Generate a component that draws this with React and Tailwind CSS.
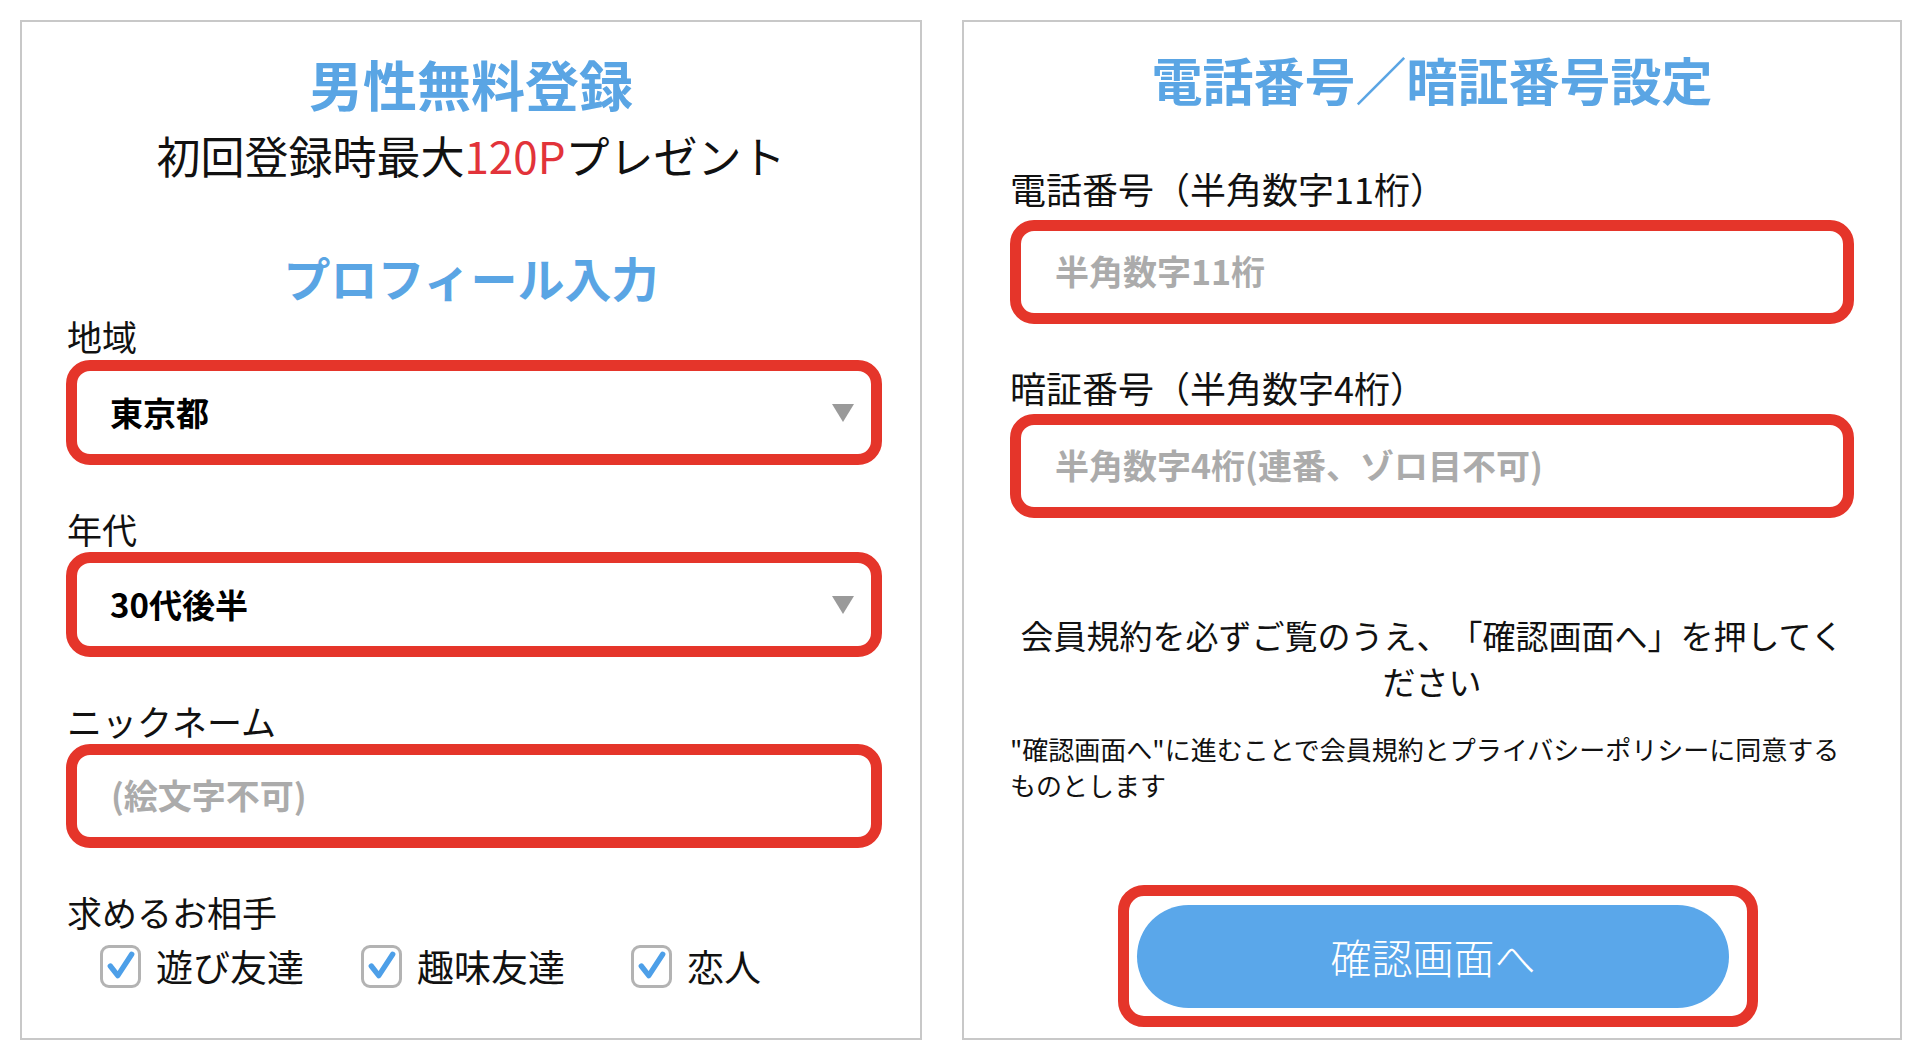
import React from "react";

const jp = { fontFamily: '"Noto Sans CJK JP", "Noto Sans", sans-serif' };

function Check({ label }) {
  return (
    <div className="flex items-center">
      <div className="w-[41px] h-[43px] rounded-[9px] border-[3px] border-[#b3b3b3] bg-white flex items-center justify-center">
        <svg width="30" height="30" viewBox="0 0 28 28">
          <path d="M4 14 L11 23 L24 3" fill="none" stroke="#4d9fe8" strokeWidth="5" strokeLinecap="round" strokeLinejoin="round" />
        </svg>
      </div>
      <span className="ml-[15px] text-[37px] leading-[44px] text-[#111]">{label}</span>
    </div>
  );
}

function SelectBox({ value }) {
  return (
    <div className="ml-[44px] w-[816px] h-[105px] rounded-[24px] border-[11px] border-[#e5352a] bg-white flex items-center pl-[33px] pr-[17px]">
      <span className="flex-1 text-[33px] font-bold text-black">{value}</span>
      <svg width="22" height="18" viewBox="0 0 22 18">
        <polygon points="0,0 22,0 11,18" fill="#9a9a9a" />
      </svg>
    </div>
  );
}

function InputBox({ placeholder, className = "" }) {
  return (
    <div className={"h-[104px] rounded-[24px] border-[11px] border-[#e5352a] bg-white flex items-center pl-[34px] pb-[4px] " + className}>
      <span className="text-[34px] font-bold text-[#ababab]">{placeholder}</span>
    </div>
  );
}

function Label({ children, className = "" }) {
  return <div className={"text-[35px] leading-[40px] text-[#111] " + className}>{children}</div>;
}

export default function App() {
  return (
    <div className="w-[1920px] h-[1060px] bg-white flex items-start pt-[20px] pl-[20px] gap-[40px] [text-spacing-trim:space-all]" style={jp}>
      {/* Left panel */}
      <div className="w-[902px] h-[1020px] border-2 border-[#c8c8c8] flex flex-col">
        <div className="mt-[32px] text-center text-[54px] leading-[60px] font-bold text-[#5aa5e4]">男性無料登録</div>
        <div className="mt-[16px] text-center text-[44px] leading-[50px] text-[#111]">
          初回登録時最大<span className="text-[#e2333a]">120P</span>プレゼント
        </div>
        <div className="mt-[70px] text-center text-[47px] leading-[54px] font-bold text-[#5aa5e4]">プロフィール入力</div>
        <Label className="mt-[12px] ml-[45px]">地域</Label>
        <div className="mt-[4px]">
          <SelectBox value="東京都" />
        </div>
        <Label className="mt-[44px] ml-[45px]">年代</Label>
        <div className="mt-[3px]">
          <SelectBox value="30代後半" />
        </div>
        <Label className="mt-[44px] ml-[45px]">ニックネーム</Label>
        <div className="mt-[3px]">
          <InputBox placeholder="(絵文字不可)" className="ml-[44px] w-[816px]" />
        </div>
        <Label className="mt-[44px] ml-[45px]">求めるお相手</Label>
        <div className="mt-[12px] ml-[78px] flex items-center">
          <div className="w-[261px]"><Check label="遊び友達" /></div>
          <div className="w-[270px]"><Check label="趣味友達" /></div>
          <Check label="恋人" />
        </div>
      </div>

      {/* Right panel */}
      <div className="w-[940px] h-[1020px] border-2 border-[#c8c8c8] flex flex-col px-[46px]">
        <div className="mt-[28px] text-center text-[51px] leading-[58px] font-bold text-[#5aa5e4]">電話番号／暗証番号設定</div>
        <Label className="mt-[60px] text-[36px]">電話番号（半角数字11桁）</Label>
        <InputBox placeholder="半角数字11桁" className="mt-[12px]" />
        <Label className="mt-[43px] text-[36px]">暗証番号（半角数字4桁）</Label>
        <InputBox placeholder="半角数字4桁(連番、ゾロ目不可)" className="mt-[7px]" />
        <div className="mt-[94px] -mx-[10px] text-center text-[33px] leading-[46px] text-[#111] whitespace-nowrap">
          会員規約を必ずご覧のうえ、「確認画面へ」を押してく<br />ださい
        </div>
        <div className="mt-[27px] -mr-[10px] text-[26px] leading-[36px] text-[#111] whitespace-nowrap">
          "確認画面へ"に進むことで会員規約とプライバシーポリシーに同意する<br />ものとします
        </div>
        <div className="mt-[82px] flex justify-center pl-[12px]">
          <div className="w-[640px] h-[142px] rounded-[26px] border-[11px] border-[#e5352a] pt-[9px] pb-[8px] pl-[8px] pr-[18px] bg-white">
            <div className="w-full h-full rounded-full bg-[#5aa7ea] flex items-center justify-center text-white text-[41px] font-light">
              確認画面へ
            </div>
          </div>
        </div>
      </div>
    </div>
  );
}
